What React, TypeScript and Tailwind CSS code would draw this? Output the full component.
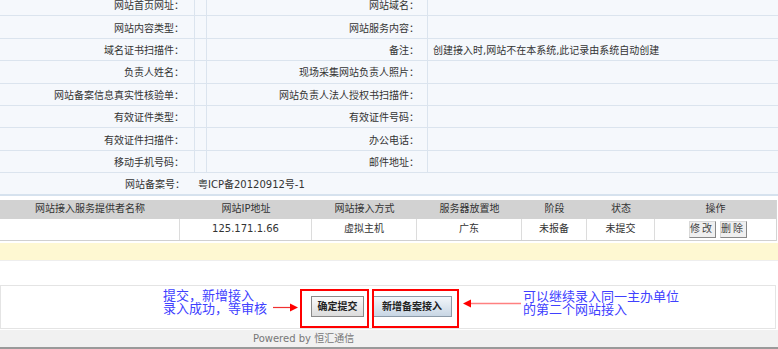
import React from "react";

type InfoRow = {
  label: string;
  label2: string;
  value2?: string;
};

const infoRows: InfoRow[] = [
  { label: "网站首页网址：", label2: "网站域名：" },
  { label: "网站内容类型：", label2: "网站服务内容：" },
  {
    label: "域名证书扫描件：",
    label2: "备注：",
    value2: "创建接入时,网站不在本系统,此记录由系统自动创建",
  },
  { label: "负责人姓名：", label2: "现场采集网站负责人照片：" },
  { label: "网站备案信息真实性核验单：", label2: "网站负责人法人授权书扫描件：" },
  { label: "有效证件类型：", label2: "有效证件号码：" },
  { label: "有效证件扫描件：", label2: "办公电话：" },
  { label: "移动手机号码：", label2: "邮件地址：" },
];

const accessHeaders = [
  "网站接入服务提供者名称",
  "网站IP地址",
  "网站接入方式",
  "服务器放置地",
  "阶段",
  "状态",
  "操作",
];

const accessRow = ["", "125.171.1.66", "虚拟主机", "广东", "未报备", "未提交"];

const SmallButton = ({ text }: { text: string }) => (
  <span className="flex h-[17px] w-[27px] items-center justify-center border border-t-[#d8d8d8] border-l-[#d8d8d8] border-r-[#888] border-b-[#888] bg-[#efefef] text-[10px] tracking-[2px] text-[#444]">
    {text}
  </span>
);

const Arrow = ({ direction }: { direction: "left" | "right" }) =>
  direction === "right" ? (
    <svg width="26" height="9" viewBox="0 0 26 9">
      <line x1="0" y1="4.5" x2="19" y2="4.5" stroke="#f03030" strokeWidth="1.2" />
      <polygon points="17,0.5 25,4.5 17,8.5" fill="#f00" />
    </svg>
  ) : (
    <svg width="60" height="9" viewBox="0 0 60 9">
      <line x1="7" y1="4.5" x2="59" y2="4.5" stroke="#ff8080" strokeWidth="1.4" />
      <polygon points="9,0.5 1,4.5 9,8.5" fill="#f00" />
    </svg>
  );

export default function App() {
  return (
    <div className="h-[349px] w-[778px] overflow-hidden bg-white font-['DejaVu_Sans','Noto_Sans_CJK_SC',sans-serif] text-[10px] leading-[12px] text-[#333]">
      {/* site info table */}
      <div className="-mt-[6px] grid grid-cols-[195px_12px_221px_350px] bg-[#f5f8fc]">
        {infoRows.map((row) => (
          <React.Fragment key={row.label}>
            <div className="flex h-[22.4px] items-center justify-end border-b border-r border-[#dbe4ee] pr-[10px] pt-[3px]">
              {row.label}
            </div>
            <div className="h-[22.4px] border-b border-r border-[#dbe4ee]" />
            <div className="flex h-[22.4px] items-center justify-end border-b border-r border-[#dbe4ee] pr-[8px] pt-[3px]">
              {row.label2}
            </div>
            <div className="flex h-[22.4px] items-center border-b border-[#dbe4ee] pl-[5px] pt-[3px]">
              {row.value2 ?? ""}
            </div>
          </React.Fragment>
        ))}
        <div className="flex h-[22.4px] items-center justify-end border-b-2 border-[#d6e2ee] pr-[10px] pt-[3px]">
          网站备案号：
        </div>
        <div className="col-span-3 flex h-[22.4px] items-center border-b-2 border-[#d6e2ee] pl-[3px] pt-[3px]">
          粤ICP备20120912号-1
        </div>
      </div>

      {/* access table */}
      <div className="mt-[4px] w-[777px] border-r border-[#d4d4d4]">
        <div className="grid h-[19px] grid-cols-[180px_132px_105px_105px_65px_68px_121px] bg-[#d2d2d2]">
          {accessHeaders.map((h) => (
            <div key={h} className="flex items-center justify-center">
              {h}
            </div>
          ))}
        </div>
        <div className="grid h-[22px] grid-cols-[180px_132px_105px_105px_65px_68px_121px] border-b border-[#d0d0d0] bg-white">
          {accessRow.map((v, i) => (
            <div key={i} className="flex items-center justify-center border-r border-[#dcdcdc]">
              {v}
            </div>
          ))}
          <div className="flex items-center justify-center gap-[4px] pl-[4px]">
            <SmallButton text="修改" />
            <SmallButton text="删除" />
          </div>
        </div>
      </div>

      <div className="mt-[2px] h-[18px] border-b border-[#eeeeee] bg-[#fef8d2]" />

      {/* action area */}
      <div className="relative mt-[24px] flex h-[44px] w-[776px] items-center border border-[#e4e4e4] pl-[310px]">
        <button className="h-[21px] w-[53px] border border-[#8a8a8a] bg-gradient-to-b from-[#fbfbfb] to-[#dcdcdc] text-[10px] font-bold text-[#222]">
          确定提交
        </button>
        <button className="ml-[8px] h-[21px] w-[80px] border border-[#8c9aa8] bg-gradient-to-b from-[#f2f6fa] to-[#c8d6e4] text-[10px] font-bold text-[#222]">
          新增备案接入
        </button>

        {/* annotations */}
        <div className="absolute left-[162px] top-[2px] font-['Noto_Sans_CJK_SC',sans-serif] text-[13px] leading-[13px] text-[#4040ff]">
          <div>提交，新增接入</div>
          <div>录入成功，等审核</div>
        </div>
        <div className="absolute left-[272px] top-[17px] flex">
          <Arrow direction="right" />
        </div>
        <div className="absolute left-[299px] top-[3px] h-[39px] w-[69px] border-2 border-[#ff0000]" />
        <div className="absolute left-[371px] top-[3px] h-[39px] w-[87px] border-2 border-[#ff0000]" />
        <div className="absolute left-[461px] top-[13px] flex">
          <Arrow direction="left" />
        </div>
        <div className="absolute left-[522px] top-[3px] font-['Noto_Sans_CJK_SC',sans-serif] text-[13px] leading-[13px] text-[#4040ff]">
          <div>可以继续录入同一主办单位</div>
          <div>的第二个网站接入</div>
        </div>
      </div>

      {/* footer */}
      <div className="mt-[1px] flex h-[19px] items-center border-b-2 border-[#9a9a9a] bg-[#f1f1f1] pl-[253px] pt-[2px] text-[10px] text-[#777]">
        Powered by 恒汇通信
      </div>
    </div>
  );
}
